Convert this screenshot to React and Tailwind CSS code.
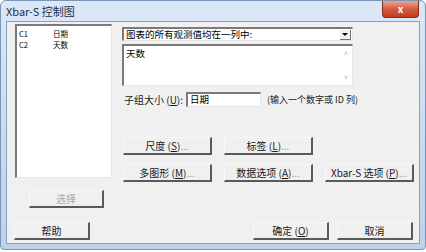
const font = { fontFamily: '"Noto Sans CJK SC", "Liberation Sans", sans-serif' };

const Btn = ({ children, className = "", disabled = false }) => (
  <div
    className={`flex items-center justify-center h-[18px] bg-[#f0f0f0] border-t border-l border-t-[#f8f8f8] border-l-[#f8f8f8] border-b-2 border-r-2 border-b-[#5a5a5a] border-r-[#5a5a5a] text-[10px] leading-none ${
      disabled ? "text-[#a8a8a8]" : "text-[#1a1a1a]"
    } ${className}`}
  >
    {children}
  </div>
);

const Sunken = ({ children, className = "" }) => (
  <div
    className={`bg-white border-t-2 border-l-2 border-t-[#7a7a7a] border-l-[#7a7a7a] border-b border-r border-b-[#e6e6e6] border-r-[#e6e6e6] ${className}`}
  >
    {children}
  </div>
);

export default function App() {
  return (
    <div
      className="w-[426px] h-[252px] bg-white text-black overflow-hidden"
      style={font}
    >
      <div className="w-[426px] h-[250px] rounded-t-[6px] rounded-b-[4px] bg-gradient-to-b from-[#dbe8f6] via-[#c9dcf0] to-[#bed3ea] border border-[#7b95b5] flex flex-col">
        <div className="h-[20px] flex items-start justify-between pl-[5px] pr-[6px]">
          <span className="text-[11px] leading-none mt-[5px] text-[#1b2f4b]">
            Xbar-S 控制图
          </span>
          <div className="w-[37px] h-[17px] rounded-b-[4px] bg-gradient-to-b from-[#e8a593] via-[#d45a3e] to-[#c23b20] border border-[#8b2a17] border-t-0 flex items-center justify-center text-white text-[10px] font-bold leading-none">
            x
          </div>
        </div>
        <div className="flex-1 mx-[5px] mb-[5px] bg-[#f0f0f0] border border-[#8aa2c0] flex flex-col pt-[2px] pl-[8px]">
          <div className="flex">
            <div className="w-[97px] flex flex-col">
              <Sunken className="h-[154px] pt-[2px] pl-[2px] text-[7.5px] leading-[11px]">
                <div className="flex h-[11px]">
                  <span className="w-[34px]">C1</span>
                  <span>日期</span>
                </div>
                <div className="flex h-[11px]">
                  <span className="w-[34px]">C2</span>
                  <span>天数</span>
                </div>
              </Sunken>
              <Btn disabled className="w-[75px] ml-[14px] mt-[12px]">
                选择
              </Btn>
            </div>
            <div className="ml-[10px] mt-[3px] flex flex-col">
              <Sunken className="w-[231px] h-[14px] flex items-center justify-between pl-[2px] pr-[1px]">
                <span className="text-[9.5px] leading-none">
                  图表的所有观测值均在一列中:
                </span>
                <div className="w-[11px] h-[10px] bg-[#f0f0f0] border-b border-r border-[#707070] flex items-center justify-center">
                  <div className="w-0 h-0 border-l-[3px] border-r-[3px] border-t-[3px] border-l-transparent border-r-transparent border-t-black" />
                </div>
              </Sunken>
              <Sunken className="w-[231px] h-[42px] mt-[3px] flex justify-between">
                <span className="text-[9.5px] leading-none mt-[3px] ml-[2px]">
                  天数
                </span>
                <div className="w-[12px] flex flex-col justify-between items-center text-[#b0b0b0] text-[7px] leading-none py-[4px]">
                  <span>˄</span>
                  <span>˅</span>
                </div>
              </Sunken>
              <div className="flex items-center mt-[6px]">
                <span className="text-[10px] leading-none w-[62px] ml-[2px] text-[#1a1a1a]">
                  子组大小 (<span className="underline">U</span>):
                </span>
                <Sunken className="w-[75px] h-[15px] flex items-center pl-[2px]">
                  <span className="text-[9.5px] leading-none">日期</span>
                </Sunken>
                <span className="text-[9px] leading-none ml-[6px] text-[#1a1a1a]">
                  (输入一个数字或 ID 列)
                </span>
              </div>
              <div className="grid grid-cols-[89px_89px_89px] gap-x-[12px] gap-y-[9px] mt-[30px] ml-[1px] -mr-[60px]">
                <Btn>
                  尺度 (<span className="underline">S</span>)<span className="text-[#999]">...</span>
                </Btn>
                <Btn>
                  标签 (<span className="underline">L</span>)<span className="text-[#999]">...</span>
                </Btn>
                <div />
                <Btn>
                  多图形 (<span className="underline">M</span>)<span className="text-[#999]">...</span>
                </Btn>
                <Btn>
                  数据选项 (<span className="underline">A</span>)<span className="text-[#999]">...</span>
                </Btn>
                <Btn>
                  Xbar-S 选项 (<span className="underline">P</span>)<span className="text-[#999]">...</span>
                </Btn>
              </div>
            </div>
          </div>
          <div className="flex mt-[14px] -ml-[1px]">
            <Btn className="w-[76px]">帮助</Btn>
            <Btn className="w-[76px] ml-[163px]">
              确定 (<span className="underline">O</span>)
            </Btn>
            <Btn className="w-[76px] ml-[8px]">取消</Btn>
          </div>
        </div>
      </div>
    </div>
  );
}
